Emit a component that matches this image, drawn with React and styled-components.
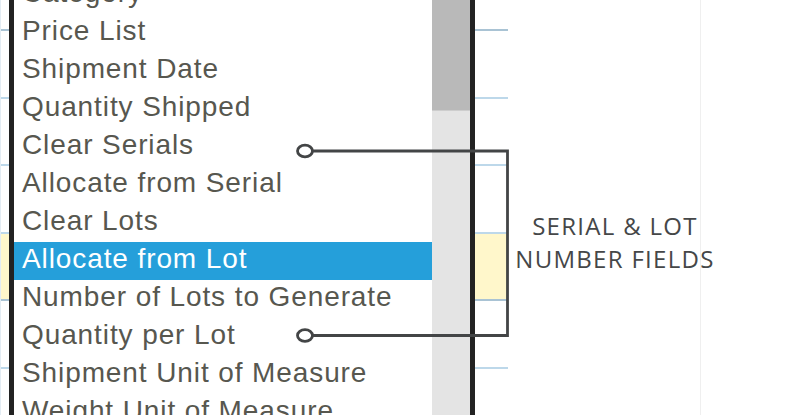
import styled, { createGlobalStyle } from "styled-components";

const GlobalStyle = createGlobalStyle`
  html, body {
    margin: 0;
    padding: 0;
    background: #fff;
  }
  #root {
    width: 800px;
    height: 415px;
    overflow: hidden;
  }
`;

const Page = styled.main`
  display: flex;
  width: 800px;
  height: 415px;
  overflow: hidden;
  background: #fff;
`;

const Grid = styled.section`
  position: relative;
  width: 508px;
  flex: 0 0 508px;
  height: 415px;
  border-left: 1px solid #e3ecf3;
  box-sizing: border-box;
  display: flex;
  flex-direction: column;
`;

const GridRow = styled.div`
  flex: 0 0 ${(p) => p.$h}px;
  box-sizing: border-box;
  border-bottom: 2px solid ${(p) => (p.$dark ? "#a9c3d4" : "#bdd8ea")};
  background: ${(p) => (p.$highlight ? "#fff7cb" : "transparent")};
`;

const ListBox = styled.div`
  position: absolute;
  left: 8px;
  top: 0;
  bottom: 0;
  width: 466px;
  box-sizing: border-box;
  border-left: 5px solid #222;
  border-right: 5px solid #222;
  background: #fff;
  display: flex;
  overflow: hidden;
`;

const Options = styled.ul`
  list-style: none;
  margin: -24px 0 0;
  padding: 0;
  flex: 1;
  min-width: 0;
`;

const Option = styled.li`
  height: 38px;
  line-height: 33px;
  padding-left: 8px;
  font-family: "Liberation Sans", Arial, sans-serif;
  font-size: 28px;
  letter-spacing: 0.9px;
  white-space: nowrap;
  color: #${(p) => (p.$selected ? "fff" : "57574f")};
  background: ${(p) => (p.$selected ? "#259fda" : "transparent")};
`;

const ScrollTrack = styled.div`
  flex: 0 0 38px;
  background: #e4e4e4;
`;

const ScrollThumb = styled.div`
  height: 110px;
  background: #b9b9b9;
  border-bottom: 1px solid #cdcdcd;
`;

const Callout = styled.svg`
  position: absolute;
  left: 0;
  top: 0;
  width: 510px;
  height: 415px;
  pointer-events: none;
  overflow: visible;
`;

const LabelColumn = styled.aside`
  flex: 0 0 193px;
  width: 193px;
  min-width: 0;
  height: 415px;
  box-sizing: border-box;
  padding: 68px 0 0 22px;
  display: flex;
  flex-direction: column;
  align-items: center;
  justify-content: center;
  border-right: 1px solid #efefef;
`;

const Label = styled.div`
  font-family: "Open Sans", "Liberation Sans", sans-serif;
  font-size: 24px;
  line-height: 33px;
  letter-spacing: 1.3px;
  color: #454748;
  text-align: center;
  white-space: nowrap;
`;

const Rest = styled.div`
  flex: 1;
`;

const rows = [
  { h: 31, dark: true },
  { h: 67.5 },
  { h: 67.5 },
  { h: 67.5 },
  { h: 67.5, highlight: true, dark: true },
  { h: 67.5 },
  { h: 67.5 },
];

const options = [
  "Category",
  "Price List",
  "Shipment Date",
  "Quantity Shipped",
  "Clear Serials",
  "Allocate from Serial",
  "Clear Lots",
  "Allocate from Lot",
  "Number of Lots to Generate",
  "Quantity per Lot",
  "Shipment Unit of Measure",
  "Weight Unit of Measure",
];

export default function App() {
  return (
    <Page>
      <GlobalStyle />
      <Grid>
        {rows.map((r, i) => (
          <GridRow key={i} $h={r.h} $dark={r.dark} $highlight={r.highlight} />
        ))}
        <ListBox>
          <Options>
            {options.map((o) => (
              <Option key={o} $selected={o === "Allocate from Lot"}>
                {o}
              </Option>
            ))}
          </Options>
          <ScrollTrack>
            <ScrollThumb />
          </ScrollTrack>
        </ListBox>
        <Callout viewBox="0 0 510 415">
          <g fill="none" stroke="#434546" strokeWidth="2.8">
            <ellipse cx="304" cy="151" rx="7.5" ry="5.8" />
            <ellipse cx="304" cy="335.5" rx="7.5" ry="5.8" />
            <path d="M311.5 151 H506.5 V335.5 H311.5" />
          </g>
        </Callout>
      </Grid>
      <LabelColumn>
        <Label>
          SERIAL &amp; LOT
          <br />
          NUMBER FIELDS
        </Label>
      </LabelColumn>
      <Rest />
    </Page>
  );
}
